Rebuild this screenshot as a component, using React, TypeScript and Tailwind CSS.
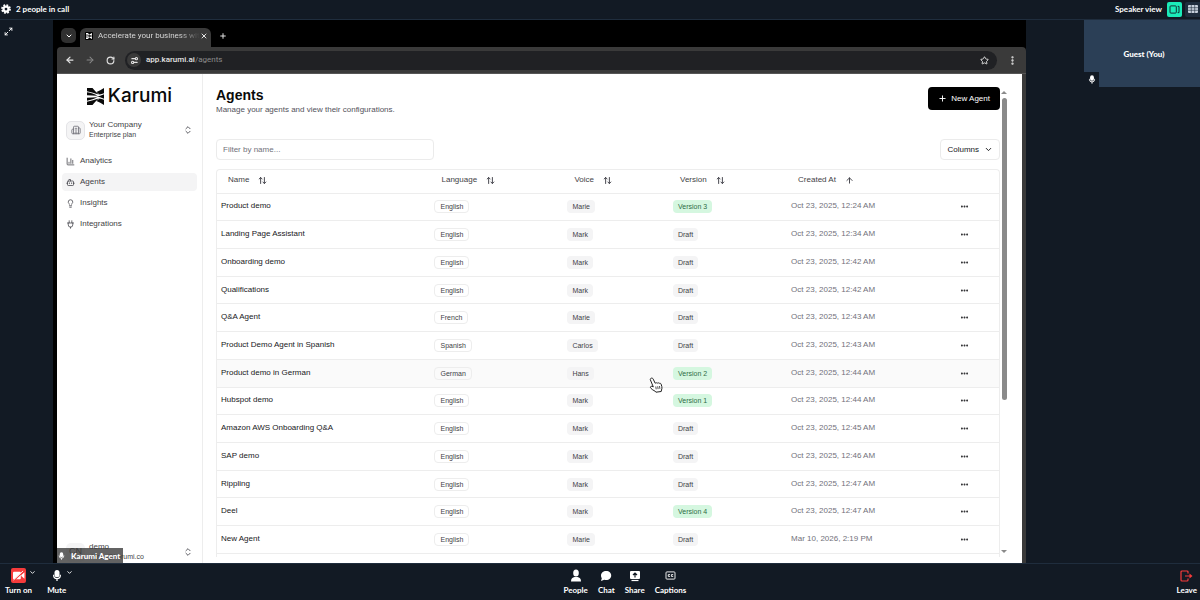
import * as React from 'react';
import {
  ArrowLeft,
  ArrowRight,
  ArrowUp,
  ArrowUpDown,
  BarChart3,
  Bot,
  Building2,
  ChevronDown,
  ChevronsUpDown,
  Ellipsis,
  EllipsisVertical,
  Lightbulb,
  Maximize2,
  Plus,
  RotateCw,
  Settings2,
  Star,
  X,
} from 'lucide-react';
import { clsx } from 'clsx';

interface Agent {
  name: string;
  language: string;
  voice: string;
  version: string;
  createdAt: string;
}

const AGENTS: Agent[] = [
  { name: 'Product demo', language: 'English', voice: 'Marie', version: 'Version 3', createdAt: 'Oct 23, 2025, 12:24 AM' },
  { name: 'Landing Page Assistant', language: 'English', voice: 'Mark', version: 'Draft', createdAt: 'Oct 23, 2025, 12:34 AM' },
  { name: 'Onboarding demo', language: 'English', voice: 'Mark', version: 'Draft', createdAt: 'Oct 23, 2025, 12:42 AM' },
  { name: 'Qualifications', language: 'English', voice: 'Mark', version: 'Draft', createdAt: 'Oct 23, 2025, 12:42 AM' },
  { name: 'Q&A Agent', language: 'French', voice: 'Marie', version: 'Draft', createdAt: 'Oct 23, 2025, 12:43 AM' },
  { name: 'Product Demo Agent in Spanish', language: 'Spanish', voice: 'Carlos', version: 'Draft', createdAt: 'Oct 23, 2025, 12:43 AM' },
  { name: 'Product demo in German', language: 'German', voice: 'Hans', version: 'Version 2', createdAt: 'Oct 23, 2025, 12:44 AM' },
  { name: 'Hubspot demo', language: 'English', voice: 'Mark', version: 'Version 1', createdAt: 'Oct 23, 2025, 12:44 AM' },
  { name: 'Amazon AWS Onboarding Q&A', language: 'English', voice: 'Mark', version: 'Draft', createdAt: 'Oct 23, 2025, 12:45 AM' },
  { name: 'SAP demo', language: 'English', voice: 'Mark', version: 'Draft', createdAt: 'Oct 23, 2025, 12:46 AM' },
  { name: 'Rippling', language: 'English', voice: 'Mark', version: 'Draft', createdAt: 'Oct 23, 2025, 12:47 AM' },
  { name: 'Deel', language: 'English', voice: 'Mark', version: 'Version 4', createdAt: 'Oct 23, 2025, 12:47 AM' },
  { name: 'New Agent', language: 'English', voice: 'Marie', version: 'Draft', createdAt: 'Mar 10, 2026, 2:19 PM' },
];

const COLUMNS = [
  { label: 'Name', width: 'w-[27.3%]' },
  { label: 'Language', width: 'w-[17%]' },
  { label: 'Voice', width: 'w-[13.5%]' },
  { label: 'Version', width: 'w-[15.1%]' },
  { label: 'Created At', width: 'w-[18.4%]', sorted: true },
];

function PlugIcon({ className }: { className?: string }) {
  return (
    <svg viewBox="0 0 24 24" fill="none" stroke="currentColor" strokeWidth="2" strokeLinecap="round" className={className} aria-hidden="true">
      <path d="M8.500 7V2M15.500 7V2M12 22v-3" />
      <path d="M4 8h16M6 8v5a6 6 0 0 0 12 0V8" />
    </svg>
  );
}

const NAV_ITEMS = [
  { label: 'Analytics', icon: BarChart3 },
  { label: 'Agents', icon: Bot, active: true },
  { label: 'Insights', icon: Lightbulb },
  { label: 'Integrations', icon: PlugIcon },
];

function KarumiMark({ className }: { className?: string }) {
  return (
    <svg viewBox="0 0 17 17" fill="currentColor" className={className} aria-hidden="true">
      <path d="M0 0h5.500C7.500 2.500 9.500 4.500 12 6.500 8 5.500 4 4 0 3.200z" />
      <path d="M0 4.300c4 .6 7.500 1.800 10.500 3.400C7 7.700 3.500 7.300 0 7.200z" />
      <path d="M0 9.800c3.500-.1 7-.5 10.500-.5C7.500 10.900 4 12.100 0 12.700z" />
      <path d="M0 17h5.500c2-2.500 4-4.500 6.500-6.500-4 1-8 2.500-12 3.300z" />
      <path d="M17 0v5.200c-1.500.8-3 1-4.500 1.200L9.500 4C12 3 14.500 1.500 17 0z" />
      <path d="M17 17v-5.200c-1.500-.8-3-1-4.500-1.200L9.500 13c2.500 1 5 2.500 7.500 4z" />
      <path d="M9 8.500c3-.2 5.500-1 8-2.200v4.400c-2.500-1.200-5-2-8-2.200z" />
    </svg>
  );
}

function MicIcon({ className }: { className?: string }) {
  return (
    <svg viewBox="0 0 12 14" className={className} aria-hidden="true">
      <rect x="3" y="0.500" width="6" height="8.500" rx="3" fill="currentColor" />
      <path d="M2 6v.8a4 4 0 0 0 8 0V6M6 10.800V13.500" fill="none" stroke="currentColor" strokeWidth="1.500" />
    </svg>
  );
}

function GearIcon({ className }: { className?: string }) {
  return (
    <svg viewBox="0 0 20 20" fill="none" stroke="currentColor" className={className} aria-hidden="true">
      <circle cx="10" cy="10" r="5" strokeWidth="4.500" />
      <circle cx="10" cy="10" r="8" strokeWidth="3.500" strokeDasharray="3.600 2.680" />
    </svg>
  );
}

function CallHeader() {
  return (
    <header className="flex h-5 shrink-0 items-center justify-between border-b border-[#1f2d3d] pb-px text-[8px] font-bold text-white">
      <div className="flex items-center gap-[5px] pl-px">
        <button type="button" aria-label="Settings">
          <GearIcon className="size-[10px]" />
        </button>
        <span>2 people in call</span>
      </div>
      <div className="flex items-center">
        <span>Speaker view</span>
        <button type="button" aria-label="Speaker view" className="ml-[5px] flex size-[15px] items-center justify-center rounded-[2px] bg-[#1bebb9] text-[#121a24]">
          <svg viewBox="0 0 12 10" fill="none" stroke="currentColor" className="h-[9px] w-[11px]">
            <rect x="1" y="1" width="7" height="8" rx="1" />
            <path d="M9.500 1.500h1.500v7H9.500" />
          </svg>
        </button>
        <button type="button" aria-label="Grid view" className="ml-[3px] flex size-[15px] items-center justify-center rounded-l-[2px] bg-[#1f2d3d] text-[#c8d1dc]">
          <svg viewBox="0 0 10 8" className="h-[8px] w-[10px]">
            <rect width="10" height="8" rx="1" fill="currentColor" />
            <path d="M0 2.700h10M0 5.300h10M3.300 0v8M6.700 0v8" stroke="#1f2d3d" strokeWidth="0.600" />
          </svg>
        </button>
      </div>
    </header>
  );
}

function BrowserChrome() {
  return (
    <div className="shrink-0 bg-black font-['Roboto',sans-serif] text-[8px]">
      <div className="flex h-[27px] items-end pl-1">
        <button type="button" aria-label="Search tabs" className="mb-1 flex size-[15px] items-center justify-center rounded-[5px] bg-[#303030] text-white">
          <ChevronDown className="size-[8px]" strokeWidth={3} />
        </button>
        <div className="ml-1 flex h-[19px] w-[131px] items-center rounded-t-[6px] bg-[#3a3a3a] pb-[3px] pl-[5px] pr-1 text-[#e3e3e3]">
          <span className="flex size-[8px] shrink-0 items-center justify-center rounded-[1px] bg-black text-white">
            <KarumiMark className="size-[6px]" />
          </span>
          <span className="ml-[5px] flex-1 whitespace-nowrap bg-linear-to-r from-[#e3e3e3] from-80% to-[#3a3a3a] bg-clip-text text-transparent">
            Accelerate your business wit
          </span>
          <button type="button" aria-label="Close tab">
            <X className="size-[8px]" strokeWidth={3} />
          </button>
        </div>
        <button type="button" aria-label="New tab" className="mb-[7px] ml-2 text-[#e3e3e3]">
          <Plus className="size-[8px]" strokeWidth={3} />
        </button>
      </div>
      <div className="flex h-[27px] items-center rounded-t-[4px] border-b border-[#555] bg-[#3a3a3a] px-2 text-[#e3e3e3]">
        <button type="button" aria-label="Back"><ArrowLeft className="size-[10px]" strokeWidth={3} /></button>
        <button type="button" aria-label="Forward" className="ml-[10px] text-[#888]"><ArrowRight className="size-[10px]" strokeWidth={2.500} /></button>
        <button type="button" aria-label="Reload" className="ml-[11px]"><RotateCw className="size-[9px]" strokeWidth={3} /></button>
        <div className="ml-[10px] flex h-[19px] flex-1 items-center rounded-full bg-[#202124] pl-[2px] pr-2">
          <span className="flex size-[14px] items-center justify-center rounded-full bg-[#3a3a3a]">
            <Settings2 className="size-[9px] -scale-x-100" strokeWidth={3} />
          </span>
          <span className="ml-[5px] pb-px font-medium">app.karumi.ai<span className="font-normal text-[#8b8b8b]">/agents</span></span>
          <button type="button" aria-label="Bookmark this page" className="ml-auto"><Star className="size-[9px]" strokeWidth={2.500} /></button>
        </div>
        <button type="button" aria-label="Browser menu" className="ml-[10px]"><EllipsisVertical className="size-[11px]" strokeWidth={3} /></button>
      </div>
    </div>
  );
}

function Sidebar() {
  return (
    <aside className="flex w-[146px] shrink-0 flex-col border-r border-[#ededed] px-[5px] text-[#3f3f46]">
      <div className="flex items-center justify-center gap-1 pt-[10px] text-[#0a0a0a]">
        <KarumiMark className="size-[17px]" />
        <span className="font-['Inter',sans-serif] text-[19px] font-medium leading-6">Karumi</span>
      </div>
      <button type="button" className="mt-[9px] flex h-[26px] items-center pl-1 pr-1 text-left">
        <span className="flex size-[19px] items-center justify-center rounded-[5px] border border-[#e4e4e7] bg-[#f4f4f5] text-[#71717a]">
          <Building2 className="size-[10px]" />
        </span>
        <span className="ml-1 flex flex-col">
          <span className="text-[8px] leading-[10px]">Your Company</span>
          <span className="text-[7px] leading-[10px]">Enterprise plan</span>
        </span>
        <ChevronsUpDown className="ml-auto size-[10px]" />
      </button>
      <nav className="mt-[9px] flex flex-col gap-[3px]">
        {NAV_ITEMS.map(({ label, icon: Icon, active }) => (
          <a
            key={label}
            href="#"
            className={clsx('flex h-[18px] items-center gap-[5px] rounded-[4px] pl-1 text-[8px]', active && 'bg-[#f4f4f5]')}
          >
            <Icon className="size-[9px]" />
            {label}
          </a>
        ))}
      </nav>
      <button type="button" className="mt-auto mb-px flex h-[20px] items-center pl-1 pr-1 text-left">
        <span className="flex size-[19px] items-center justify-center rounded-[5px] bg-[#f4f4f5] text-[9px]">CN</span>
        <span className="ml-1 flex flex-col">
          <span className="text-[8px] leading-[10px]">demo</span>
          <span className="text-[7px] leading-[10px]">demo@karumi.co</span>
        </span>
        <ChevronsUpDown className="ml-auto size-[10px]" />
      </button>
    </aside>
  );
}

function AgentsTable() {
  return (
    <div className="mt-[9px] flex-1 overflow-hidden rounded-t-[4px] border border-b-0 border-[#ededed]">
      <table className="h-[384px] w-full table-fixed border-collapse text-left text-[8px] text-[#18181b]">
        <thead>
          <tr className="h-[23px] border-b border-[#ededed] text-[#3f3f46]">
            {COLUMNS.map((column) => (
              <th key={column.label} className={clsx('pb-[2px] pl-[11px] font-normal', column.width)}>
                <button type="button" className="flex items-center gap-[9px]">
                  {column.label}
                  {column.sorted ? <ArrowUp className="size-[9px]" strokeWidth={2.500} /> : <ArrowUpDown className="size-[9px]" strokeWidth={2.500} />}
                </button>
              </th>
            ))}
            <th aria-label="Actions" />
          </tr>
        </thead>
        <tbody>
          {AGENTS.map((agent, index) => (
            <tr key={agent.name} className={clsx('border-b border-[#ededed]', index === 6 && 'bg-[#fafafa]')}>
              <td className="pb-px pl-1">{agent.name}</td>
              <td className="py-0 pl-1">
                <span className="inline-block rounded-[4px] border border-[#ededed] px-[5px] text-[7px] leading-[11px] text-[#3f3f46]">{agent.language}</span>
              </td>
              <td className="py-0 pl-1">
                <span className="inline-block rounded-[4px] bg-[#f4f4f5] px-[5px] text-[7px] leading-[13px] text-[#3f3f46]">{agent.voice}</span>
              </td>
              <td className="py-0 pl-1">
                <span
                  className={clsx(
                    'inline-block rounded-[4px] px-[5px] text-[7px] leading-[13px]',
                    agent.version === 'Draft' ? 'bg-[#f4f4f5] text-[#3f3f46]' : 'bg-[#d5f7e0] text-[#2f6b46]'
                  )}
                >
                  {agent.version}
                </span>
              </td>
              <td className="pb-px pl-1 text-[#71717a]">{agent.createdAt}</td>
              <td className="py-0">
                <button type="button" aria-label={`Actions for ${agent.name}`} className="mx-auto block">
                  <Ellipsis className="size-[9px]" strokeWidth={3} />
                </button>
              </td>
            </tr>
          ))}
        </tbody>
      </table>
    </div>
  );
}

function AgentsPage() {
  return (
    <main className="flex min-w-0 flex-1 flex-col pb-[6px] pl-[13px] pt-[13px]">
      <div className="flex items-start justify-between">
        <div>
          <h1 className="text-[14px] font-bold leading-[16px] text-[#0a0a0a]">Agents</h1>
          <p className="pt-px text-[8px] leading-[12px] text-[#52525b]">Manage your agents and view their configurations.</p>
        </div>
        <button type="button" className="flex h-[23px] items-center gap-1 rounded-[4px] bg-black px-[10px] text-[8px] text-white">
          <Plus className="size-[9px]" strokeWidth={2.500} />
          New Agent
        </button>
      </div>
      <div className="mt-[23px] flex items-center justify-between">
        <input
          type="text"
          aria-label="Filter by name"
          placeholder="Filter by name..."
          className="h-[21px] w-[218px] rounded-[4px] border border-[#ebebeb] px-[6px] pb-px text-[8px] placeholder:text-[#71717a]"
        />
        <button type="button" className="flex h-[21px] items-center gap-[5px] rounded-[4px] border border-[#ebebeb] px-[6px] text-[8px] text-[#18181b]">
          Columns
          <ChevronDown className="size-[9px]" strokeWidth={2.500} />
        </button>
      </div>
      <AgentsTable />
    </main>
  );
}

function Scrollbar() {
  return (
    <div className="mr-[14px] mt-[15px] mb-[6px] flex w-[8px] shrink-0 flex-col items-center">
      <span className="mt-[2px] border-x-[3px] border-b-[3px] border-x-transparent border-b-[#8a8a8a]" />
      <span className="mt-1 h-[302px] w-[5px] rounded-full bg-[#8a8a8a]" />
      <span className="mt-auto mb-1 border-x-[3px] border-t-[3px] border-x-transparent border-t-[#8a8a8a]" />
    </div>
  );
}

function HandCursor() {
  return (
    <svg viewBox="0 0 14 16" className="absolute left-[592px] top-[303px] h-[16px] w-[14px]" aria-hidden="true">
      <path
        d="M2 1.300c.9-.5 1.800-.1 2.200.8l2 4.200c.5-.7 1.500-.7 2 0 .5-.6 1.600-.6 2 .1.700-.4 1.600-.1 1.900.7l.7 2.400c.3 1.200.2 2.300-.3 3.500l-.3 1.500-5.300.7-1-1.200c-1.500-.5-2.800-1.500-4.100-2.800-.9-1-.1-2.200 1.100-1.900l1.400.6-2.900-7C1.100 2.300 1.300 1.700 2 1.300z"
        fill="white"
        stroke="#222"
      />
      <path d="M6.800 9.500l.4 2.800M8.700 9.300l.4 2.800M10.500 9l.4 2.800" stroke="#222" strokeWidth="0.800" />
    </svg>
  );
}

function SharedScreen() {
  return (
    <section aria-label="Shared screen" className="relative ml-[53px] flex min-w-0 flex-1 flex-col bg-black pl-1">
      <BrowserChrome />
      <div className="relative flex min-h-0 flex-1 border-r-4 border-[#3a3a3a] bg-white font-['Liberation_Sans',Arial,sans-serif]">
        <Sidebar />
        <AgentsPage />
        <Scrollbar />
        <HandCursor />
      </div>
      <div className="absolute bottom-0 left-1 flex h-[15px] w-[66px] items-center gap-[6px] bg-[#3c3c3c]/80 text-[8px] font-black whitespace-nowrap text-white">
        <MicIcon className="ml-px h-[8px] w-[7px]" />
        Karumi Agent
      </div>
    </section>
  );
}

function TrayButton({ label, children }: { label: string; children: React.ReactNode }) {
  return (
    <button type="button" className="flex flex-col items-center gap-[2px] leading-[11px]">
      <span className="flex h-[15px] items-center justify-center">{children}</span>
      {label}
    </button>
  );
}

function CallTray() {
  return (
    <footer className="flex h-[37px] shrink-0 items-center justify-between border-t border-[#1f2d3d] pl-[5px] pr-[3px] text-[8px] font-bold text-white">
      <div className="flex gap-[15px]">
        <div className="relative flex items-start">
          <TrayButton label="Turn on">
            <span className="flex size-[15px] items-center justify-center rounded-[2px] bg-[#f63b3b]">
              <svg viewBox="0 0 14 12" className="h-[11px] w-[13px]">
                <rect x="1" y="2" width="8.500" height="8" rx="1" fill="white" />
                <path d="M10 5.500L13.500 2.500v7L10 6.500z" fill="white" />
                <path d="M2.500 11L13 1" stroke="#f63b3b" strokeWidth="1.500" />
                <path d="M1.500 11L12 1" stroke="white" strokeWidth="1" />
              </svg>
            </span>
          </TrayButton>
          <button type="button" aria-label="Camera options" className="absolute -right-1 top-px"><ChevronDown className="size-[7px]" strokeWidth={3} /></button>
        </div>
        <div className="flex items-start">
          <TrayButton label="Mute"><MicIcon className="h-[13px] w-[10px]" /></TrayButton>
          <button type="button" aria-label="Microphone options" className="pt-px"><ChevronDown className="size-[7px]" strokeWidth={3} /></button>
        </div>
      </div>
      <div className="flex gap-[10px]">
        <TrayButton label="People">
          <svg viewBox="0 0 12 13" fill="currentColor" className="h-[13px] w-[12px]">
            <ellipse cx="6" cy="4" rx="2.800" ry="3.500" />
            <path d="M1 12.500c0-3 1.500-4 3.500-4.500h3c2 .5 3.500 1.500 3.500 4.500z" />
          </svg>
        </TrayButton>
        <TrayButton label="Chat">
          <svg viewBox="0 0 12 12" fill="currentColor" className="size-[12px]">
            <path d="M6.200 1c3 0 5 2 5 4.500s-2 4.500-5 4.500c-.7 0-1.300-.1-1.900-.3L1 11l.8-2.800C1.200 7.400 1 6.500 1 5.500 1 3 3.200 1 6.200 1z" />
          </svg>
        </TrayButton>
        <TrayButton label="Share">
          <svg viewBox="0 0 12 12" className="size-[12px]">
            <rect x="1" y="1" width="10" height="8" rx="1" fill="currentColor" />
            <path d="M2.500 10.500h7" stroke="currentColor" strokeWidth="1.200" />
            <path d="M6 7.500V3.200M4 5l2-2 2 2" fill="none" stroke="#121a24" strokeWidth="1.200" />
          </svg>
        </TrayButton>
        <TrayButton label="Captions">
          <svg viewBox="0 0 12 10" fill="none" stroke="currentColor" className="h-[9px] w-[11px]">
            <rect x="1" y="1" width="10" height="8" rx="1" />
            <path d="M5.500 4H3.500v2h2M9 4H7v2h2" />
          </svg>
        </TrayButton>
      </div>
      <TrayButton label="Leave">
        <svg viewBox="0 0 13 12" fill="none" stroke="#f63b3b" strokeWidth="1.200" className="h-[12px] w-[13px]">
          <path d="M8 3.500V2a1 1 0 0 0-1-1H2a1 1 0 0 0-1 1v8a1 1 0 0 0 1 1h5a1 1 0 0 0 1-1V8.500M5 6h5.500" />
          <path d="M9.500 3.500L12.500 6 9.500 8.500z" fill="#f63b3b" stroke="none" />
        </svg>
      </TrayButton>
    </footer>
  );
}

export default function App() {
  return (
    <div className="flex h-screen flex-col bg-[#121a24] font-['Lato',sans-serif]">
      <CallHeader />
      <div className="relative flex min-h-0 flex-1">
        <button type="button" aria-label="Enter full screen" className="absolute left-1 top-[7px] text-white">
          <Maximize2 className="size-[9px]" strokeWidth={2.500} />
        </button>
        <SharedScreen />
        <aside className="flex w-[174px] shrink-0 flex-col items-end">
          <div className="relative flex h-[67px] w-[116px] items-center justify-center bg-[#2b3f56] pl-1 text-[8px] font-black text-white">
            Guest (You)
            <span className="absolute bottom-0 left-0 flex size-[15px] items-center justify-center bg-[#121a24]">
              <MicIcon className="h-[9px] w-[8px]" />
            </span>
          </div>
        </aside>
      </div>
      <CallTray />
    </div>
  );
}
